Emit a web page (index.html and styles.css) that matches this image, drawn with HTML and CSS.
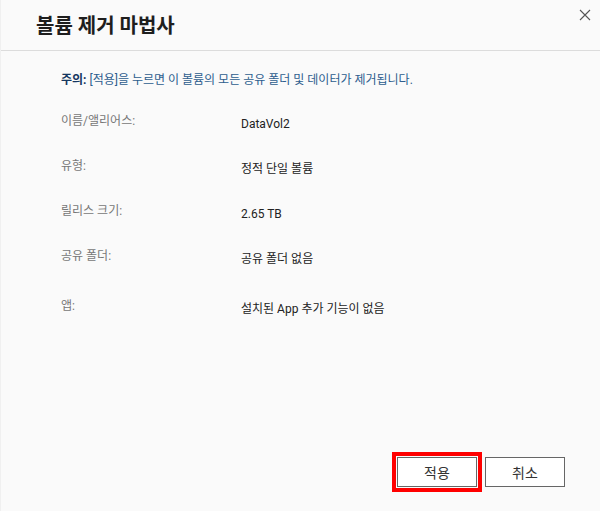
FILE: index.html
```html
<!DOCTYPE html>
<html lang="ko">
<head>
  <meta charset="UTF-8">
  <title>볼륨 제거 마법사</title>
  <link rel="stylesheet" href="styles.css">
</head>
<body>
  <div class="wizard">
    <div class="wizard-head">
      <h1 class="wizard-title">볼륨 제거 마법사</h1>
      <button class="close-btn" title="닫기">
        <svg width="12" height="12" viewBox="0 0 12 12"><path d="M1 1 L11 11 M11 1 L1 11" stroke="#555" stroke-width="1.1" fill="none"/></svg>
      </button>
    </div>

    <div class="wizard-body">
      <p class="notice"><b>주의:</b> [적용]을 누르면 이 볼륨의 모든 공유 폴더 및 데이터가 제거됩니다.</p>

      <div class="info-row">
        <span class="info-label">이름/앨리어스:</span>
        <span class="info-value">DataVol2</span>
      </div>
      <div class="info-row">
        <span class="info-label">유형:</span>
        <span class="info-value">정적 단일 볼륨</span>
      </div>
      <div class="info-row">
        <span class="info-label">릴리스 크기:</span>
        <span class="info-value">2.65 TB</span>
      </div>
      <div class="info-row">
        <span class="info-label">공유 폴더:</span>
        <span class="info-value">공유 폴더 없음</span>
      </div>
      <div class="info-row info-row-app">
        <span class="info-label">앱:</span>
        <span class="info-value">설치된 App 추가 기능이 없음</span>
      </div>
    </div>

    <div class="wizard-foot">
      <button class="btn btn-focus">적용</button>
      <button class="btn">취소</button>
    </div>
  </div>
</body>
</html>
```

FILE: styles.css
```css
html, body {
  margin: 0;
  height: 100%;
}

body {
  background: #fafafa;
  font-family: Roboto, "Noto Sans CJK KR", sans-serif;
  color: #222;
}

.wizard {
  height: 100%;
  display: flex;
  flex-direction: column;
  box-sizing: border-box;
  border-left: 1px solid #f0f0f0;
}

.wizard-head {
  height: 50px;
  flex: none;
  display: flex;
  justify-content: space-between;
  align-items: flex-start;
  border-bottom: 1px solid #dcdcdc;
}

.wizard-title {
  margin: 0;
  padding: 12px 0 0 35px;
  font-size: 20px;
  line-height: 28px;
  font-weight: bold;
  color: #1e1e1e;
}

.close-btn {
  background: none;
  border: none;
  padding: 0;
  margin: 9px 9px 0 0;
  width: 13px;
  height: 13px;
  cursor: pointer;
}

.wizard-body {
  flex: 1;
  padding: 21px 60px 0 60px;
}

.notice {
  margin: 0 0 28px 0;
  font-size: 12px;
  line-height: 16px;
  color: #2d5d8e;
}

.notice b {
  color: #163760;
}

.info-row {
  display: grid;
  grid-template-columns: 180px 1fr;
  height: 45px;
  font-size: 12px;
}

.info-row-app {
  margin-top: 5px;
}

.info-label {
  color: #777;
  line-height: 10px;
}

.info-value {
  color: #222;
  line-height: 16px;
}

.wizard-foot {
  flex: none;
  display: flex;
  justify-content: flex-end;
  gap: 8px;
  padding: 0 35px 24px 0;
}

.btn {
  width: 80px;
  height: 30px;
  background: #fff;
  border: 1px solid #666;
  font-family: Roboto, "Noto Sans CJK KR", sans-serif;
  font-size: 14px;
  color: #333;
  cursor: pointer;
}

.btn-focus {
  outline: 4px solid #f00;
  outline-offset: 1px;
}
```
